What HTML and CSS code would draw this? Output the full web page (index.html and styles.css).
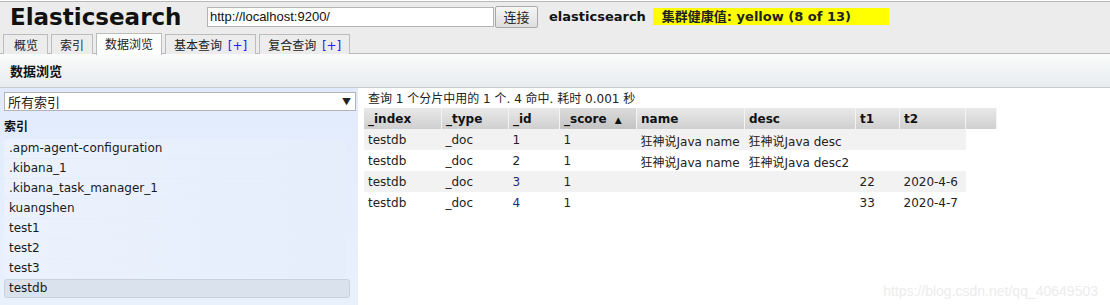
FILE: index.html
```html
<!DOCTYPE html>
<html lang="zh">
<head>
    <meta charset="UTF-8">
    <title>Elasticsearch Head</title>
    <link rel="stylesheet" href="styles.css">
</head>
<body>
    <div class="header">
        <div class="top-row">
            <h1>Elasticsearch</h1>
            <input class="url" type="text" value="http://localhost:9200/">
            <button class="connect">连接</button>
            <span class="cluster">elasticsearch</span>
            <span class="health">集群健康值: yellow (8 of 13)</span>
        </div>
        <div class="tabs">
            <div class="tab">概览</div>
            <div class="tab">索引</div>
            <div class="tab active">数据浏览</div>
            <div class="tab">基本查询 <span class="plus">[+]</span></div>
            <div class="tab">复合查询 <span class="plus">[+]</span></div>
        </div>
    </div>

    <div class="section-title">数据浏览</div>

    <div class="main">
        <div class="sidebar">
            <div class="select">
                <span>所有索引</span>
                <span class="arrow">▼</span>
            </div>
            <div class="side-label">索引</div>
            <ul class="index-list">
                <li>.apm-agent-configuration</li>
                <li>.kibana_1</li>
                <li>.kibana_task_manager_1</li>
                <li>kuangshen</li>
                <li>test1</li>
                <li>test2</li>
                <li>test3</li>
                <li class="selected">testdb</li>
            </ul>
        </div>

        <div class="results">
            <div class="summary">查询 1 个分片中用的 1 个. 4 命中. 耗时 0.001 秒</div>
            <table class="grid">
                <thead>
                    <tr>
                        <th class="c-index">_index</th>
                        <th class="c-type">_type</th>
                        <th class="c-id">_id</th>
                        <th class="c-score sorted">_score <span class="sort">▲</span></th>
                        <th class="c-name">name</th>
                        <th class="c-desc">desc</th>
                        <th class="c-t1">t1</th>
                        <th class="c-t2">t2</th>
                        <th class="c-pad"></th>
                    </tr>
                </thead>
                <tbody>
                    <tr>
                        <td>testdb</td><td>_doc</td><td>1</td><td>1</td>
                        <td>狂神说Java name</td><td>狂神说Java desc</td><td></td><td></td><td class="c-pad"></td>
                    </tr>
                    <tr>
                        <td>testdb</td><td>_doc</td><td>2</td><td>1</td>
                        <td>狂神说Java name</td><td>狂神说Java desc2</td><td></td><td></td><td class="c-pad"></td>
                    </tr>
                    <tr>
                        <td>testdb</td><td>_doc</td><td class="num">3</td><td>1</td>
                        <td></td><td></td><td>22</td><td>2020-4-6</td><td class="c-pad"></td>
                    </tr>
                    <tr>
                        <td>testdb</td><td>_doc</td><td class="num">4</td><td>1</td>
                        <td></td><td></td><td>33</td><td>2020-4-7</td><td class="c-pad"></td>
                    </tr>
                </tbody>
            </table>
            <div class="watermark">https://blog.csdn.net/qq_40649503</div>
        </div>
    </div>
</body>
</html>
```

FILE: styles.css
```css
body {
    margin: 0;
    padding-top: 1px;
    font-family: "DejaVu Sans", Verdana, "Noto Sans CJK SC", sans-serif;
    font-size: 12px;
    color: #222;
    background-color: white;
    height: 304px;
    overflow: hidden;
}
.header {
    background-color: #ececec;
    border-top: 1px solid #b9b9b9;
    border-bottom: 1px solid #b9b9b9;
    height: 51px;
}
.top-row {
    display: flex;
    align-items: center;
    height: 29px;
    padding-left: 10px;
}
h1 {
    margin: 0;
    font-size: 23px;
    font-weight: bold;
    color: #111;
    width: 197px;
    line-height: 28px;
}
.url {
    width: 281px;
    height: 14px;
    padding: 2px 2px;
    border: 1px solid #b4b4b4;
    font-family: "Liberation Sans", Arial, sans-serif;
    font-size: 13px;
    color: #111;
}
.connect {
    margin-left: 1px;
    height: 22px;
    width: 43px;
    padding: 0;
    border: 1px solid #a9a9a9;
    border-radius: 2px;
    background: linear-gradient(#f6f6f6, #dedede);
    font-family: "Noto Sans CJK SC", sans-serif;
    font-size: 13px;
    color: #222;
}
.cluster {
    margin-left: 11px;
    font-size: 13px;
    font-weight: bold;
    color: #111;
}
.health {
    margin-left: 7px;
    background-color: #ffff00;
    padding: 0 9px;
    width: 218px;
    font-size: 13px;
    font-weight: bold;
    line-height: 17px;
    color: #222;
}
.tabs {
    display: flex;
    gap: 3px;
    padding-left: 3px;
    margin-top: 3px;
}
.tab {
    height: 19px;
    line-height: 20px;
    padding: 0 8px;
    border: 1px solid #bcbcbc;
    border-bottom: none;
    background-color: #ececec;
    font-family: "Noto Sans CJK SC", sans-serif;
    font-size: 12px;
    color: #222;
}
.tab:first-child {
    padding: 0 9px 0 10px;
}
.tab.active {
    background-color: #fcfdfd;
    height: 21px;
    margin-top: -1px;
    margin-bottom: -1px;
}
.plus {
    font-family: "DejaVu Sans", sans-serif;
    color: #2020ff;
    margin-left: 3px;
}
.section-title {
    height: 33px;
    line-height: 33px;
    padding-left: 10px;
    background: linear-gradient(#fafbfb, #e8ecee);
    border-bottom: 1px solid #c9c9c9;
    font-family: "Noto Sans CJK SC", sans-serif;
    font-size: 13px;
    font-weight: bold;
    color: #111;
}
.main {
    display: flex;
}
.sidebar {
    width: 354px;
    padding: 4px 0 0 4px;
    height: 213px;
    background: linear-gradient(#e2ebfc, #e9f1fd);
}
.select {
    display: flex;
    justify-content: space-between;
    align-items: center;
    width: 347px;
    height: 17px;
    border: 1px solid #b4b4b4;
    background-color: white;
    padding-left: 3px;
    font-family: "Noto Sans CJK SC", sans-serif;
    font-size: 13px;
    color: #222;
}
.arrow {
    font-size: 9px;
    margin-right: 4px;
}
.side-label {
    margin: 6px 0 0 0;
    font-family: "Noto Sans CJK SC", sans-serif;
    font-weight: bold;
    font-size: 12px;
    line-height: 18px;
    color: #111;
}
.index-list {
    list-style: none;
    margin: 4px 0 0 0;
    padding: 0;
}
.index-list li {
    width: 337px;
    height: 19px;
    line-height: 19px;
    margin-bottom: 1px;
    padding-left: 5px;
    border-radius: 3px;
    background: linear-gradient(90deg, #ebf2fd, #e6eefc);
    font-size: 12px;
    color: #1a1a1a;
}
.index-list li.selected {
    width: 340px;
    height: 17px;
    line-height: 17px;
    padding-left: 4px;
    background-color: #d9e2ed;
    background-image: none;
    border: 1px solid #c8d2de;
}
.results {
    flex: 1;
    padding: 3px 0 0 6px;
    position: relative;
}
.summary {
    padding-left: 4px;
    font-size: 12px;
    line-height: 17px;
    color: #222;
}
.grid {
    border-collapse: collapse;
    table-layout: fixed;
    width: 633px;
}
.grid th {
    height: 21px;
    padding: 0 0 0 4px;
    text-align: left;
    font-size: 12px;
    font-weight: bold;
    color: #111;
    background: linear-gradient(#e9e9e9, #cfcfcf);
    border-right: 1px solid #f4f4f4;
}
.grid th.sorted {
    background: linear-gradient(#dcdcdc, #c3c3c3);
}
.sort {
    font-size: 9px;
    margin-left: 4px;
}
.grid td {
    height: 20px;
    padding: 1px 0 0 4px;
    font-size: 12px;
    color: #222;
    white-space: nowrap;
    overflow: hidden;
}
.grid tbody tr:nth-child(odd) td {
    background-color: #f2f2f2;
}
.grid tbody tr td.c-pad {
    background-color: white;
}
.grid td.num {
    color: #1a2a80;
}
.c-index { width: 73px; }
.c-type { width: 62px; }
.c-id { width: 46px; }
.c-score { width: 72px; }
.c-name { width: 103px; }
.c-desc { width: 106px; }
.c-t1 { width: 39px; }
.c-t2 { width: 61px; }
.c-pad { width: 26px; }
.watermark {
    position: absolute;
    right: 12px;
    bottom: 6px;
    font-family: "Liberation Sans", Arial, sans-serif;
    font-size: 14px;
    color: #ececec;
}
```
